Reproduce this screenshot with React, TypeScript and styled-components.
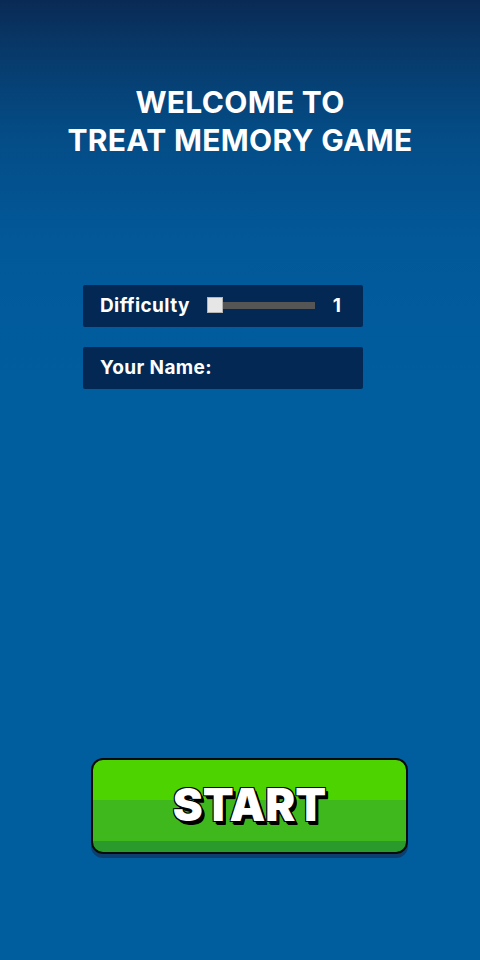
import React, { FC, useState } from 'react';
import styled, { createGlobalStyle } from 'styled-components';

const GlobalStyle = createGlobalStyle`
  html, body {
    margin: 0;
    padding: 0;
    height: 100%;
  }
  body {
    font-family: Inter, "Noto Sans", "DejaVu Sans", sans-serif;
  }
  #root {
    height: 100%;
  }
`;

const Screen = styled('div')`
  width: 480px;
  height: 960px;
  display: flex;
  flex-direction: column;
  align-items: center;
  background: linear-gradient(180deg, #0a2a55 0%, #073b6c 6%, #044c86 14%, #02599a 26%, #005d9e 40%, #005d9e 100%);
  color: #ffffff;
  box-sizing: border-box;
  padding-top: 83px;
`;

const Title = styled('h1')`
  margin: 0;
  font-size: 30px;
  font-weight: 700;
  line-height: 38px;
  text-align: center;
  letter-spacing: 0.3px;
`;

const Form = styled('div')`
  align-self: flex-start;
  margin: 126px 0 0 83px;
  width: 280px;
  display: flex;
  flex-direction: column;
  gap: 20px;
`;

const Panel = styled('div')`
  height: 42px;
  background: #022853;
  border-radius: 2px;
  display: flex;
  align-items: center;
  padding: 0 22px 2px 17px;
  box-sizing: border-box;
  font-size: 19px;
  font-weight: 700;
`;

const Label = styled('span')`
  letter-spacing: 0.4px;
`;

const Track = styled('div')`
  position: relative;
  flex: 1;
  height: 7px;
  margin: 0 18px 0 18px;
  background: #555555;
`;

const Thumb = styled('div')`
  position: absolute;
  left: -1px;
  top: 50%;
  width: 16px;
  height: 16px;
  transform: translateY(-50%);
  background: #e6e6e6;
  border: 1px solid #b5b5b5;
  box-sizing: border-box;
`;

const Value = styled('span')`
  font-size: 19px;
`;

const Spacer = styled('div')`
  flex: 1;
`;

const StartButton = styled('button')`
  align-self: flex-start;
  margin: 0 0 106px 91px;
  width: 317px;
  height: 96px;
  padding: 0 0 4px 0;
  border: 2px solid #0a0a0a;
  border-radius: 12px;
  background: linear-gradient(180deg, #4dd400 0%, #4dd400 44%, #3fb81e 44%, #3fb81e 88%, #2b9a2c 88%, #2b9a2c 100%);
  box-shadow: 0 4px 0 #0c3f6e;
  display: flex;
  align-items: center;
  justify-content: center;
  cursor: pointer;
  font-family: Inter, "Noto Sans", sans-serif;
  font-size: 45px;
  font-weight: 900;
  color: #ffffff;
  text-shadow:
    2px 3px 0 #000,
    3px 3px 0 #000,
    3px 4px 0 #000,
    -1px -1px 0 #000,
    1px -1px 0 #000,
    -1px 1px 0 #000,
    1px 1px 0 #000;
  box-sizing: border-box;
`;

const App: FC = () => {
  const [difficulty] = useState(1);
  return (
    <>
      <GlobalStyle />
      <Screen>
        <Title>
          WELCOME TO
          <br />
          TREAT MEMORY GAME
        </Title>
        <Form>
          <Panel>
            <Label>Difficulty</Label>
            <Track>
              <Thumb />
            </Track>
            <Value>{difficulty}</Value>
          </Panel>
          <Panel>
            <Label>Your Name:</Label>
          </Panel>
        </Form>
        <Spacer />
        <StartButton>START</StartButton>
      </Screen>
    </>
  );
};

export default App;
